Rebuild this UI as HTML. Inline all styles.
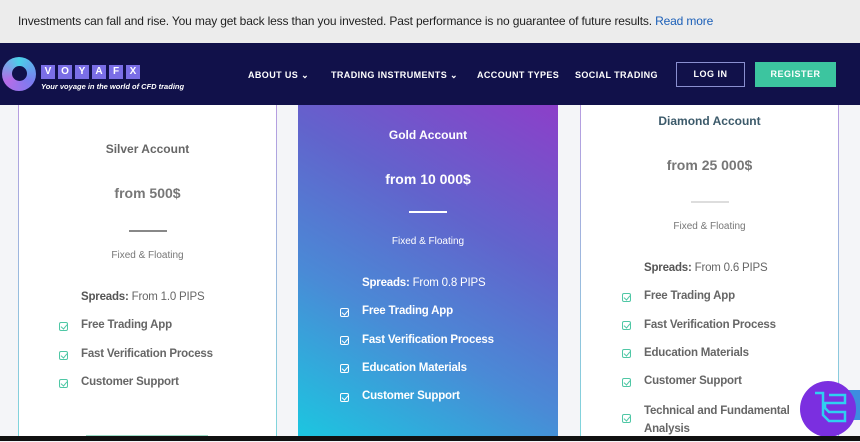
<!DOCTYPE html>
<html><head><style>
*{margin:0;padding:0;box-sizing:border-box}
body{width:860px;height:441px;overflow:hidden;background:#f4f5f8;font-family:"Liberation Sans",sans-serif;position:relative}
.top{position:absolute;left:0;top:0;width:860px;height:43px;background:#ececec;font-size:12px;color:#222;padding:14px 0 0 18px;letter-spacing:-.15px}
.top a{color:#1b5fb8;text-decoration:none}
.nav{position:absolute;left:0;top:43px;width:860px;height:62px;background:#11114a}
.nav .m{position:absolute;top:27px;color:#fff;font-size:9px;font-weight:bold;letter-spacing:.4px}
.btn{position:absolute;top:19px;height:25px;font-size:9px;font-weight:bold;color:#fff;text-align:center;line-height:23px;letter-spacing:.5px}
.card{position:absolute;top:105px;height:331px;background:#fff;text-align:center;color:#666}
.side{position:absolute;top:0;bottom:0;width:1px;background:linear-gradient(#b79ce0,#7fd6dc)}
.t{position:absolute;width:100%;font-size:12px;font-weight:bold}
.p{position:absolute;width:100%;font-size:14px;font-weight:bold;color:#777}
.hr{position:absolute;left:50%;margin-left:-19px;width:38px;height:2px;background:#888}
.f{position:absolute;width:100%;font-size:10px;color:#777}
.li{position:absolute;font-size:11.5px;font-weight:bold;color:#666;text-align:left;letter-spacing:-.2px}
.ck{position:absolute;width:9px;height:9px;border:1.5px solid #4fc7a5;border-radius:2px}
.ck::after{content:"";position:absolute;left:2px;top:0px;width:3px;height:5px;border:solid #4fc7a5;border-width:0 1.5px 1.5px 0;transform:rotate(40deg)}
.gold{background:linear-gradient(30deg,#1cc6e0 0%,#4a8ad6 35%,#6263cc 65%,#8c3fc9 100%);color:#fff}
.gold .t,.gold .p,.gold .f,.gold .li{color:#fff}
.gold .hr{background:#fff}
.gold .ck{border-color:#fff}
.gold .ck::after{border-color:#fff}
.bot{position:absolute;left:0;top:436px;width:860px;height:5px;background:#111}
.lg{width:14px;height:14px;background:#7a6ee6;color:#fff;font-size:10px;font-weight:bold;text-align:center;line-height:14px}
</style></head><body>
<div class="top">Investments can fall and rise. You may get back less than you invested. Past performance is no guarantee of future results. <a>Read more</a></div>
<div class="nav">
<div style="position:absolute;left:2px;top:14px;width:34px;height:34px;border-radius:50%;background:conic-gradient(#4ad0e8,#7b7cf0,#b66ce8,#4ad0e8)"><div style="position:absolute;left:10px;top:9px;width:15px;height:15px;border-radius:50%;background:#11114a"></div></div>
<div style="position:absolute;left:41px;top:22px;display:flex;gap:3px">
<span class="lg">V</span><span class="lg">O</span><span class="lg">Y</span><span class="lg">A</span><span class="lg">F</span><span class="lg">X</span></div>
<div style="position:absolute;left:41px;top:39px;color:#fff;font-size:7.5px;font-style:italic;font-weight:bold">Your voyage in the world of CFD trading</div>
<div class="m" style="left:248px">ABOUT US &#8964;</div>
<div class="m" style="left:331px">TRADING INSTRUMENTS &#8964;</div>
<div class="m" style="left:477px">ACCOUNT TYPES</div>
<div class="m" style="left:575px">SOCIAL TRADING</div>
<div class="btn" style="left:676px;width:69px;border:1.5px solid #8a8fd0">LOG IN</div>
<div class="btn" style="left:755px;width:81px;background:#3cc59f;line-height:25px">REGISTER</div>
</div>

<div class="card" style="left:18px;width:259px">
<div class="side" style="left:0"></div><div class="side" style="right:0"></div>
<div class="t" style="top:37px">Silver Account</div>
<div class="p" style="top:80px">from 500$</div>
<div class="hr" style="top:125px"></div>
<div class="f" style="top:145px">Fixed &amp; Floating</div>
<div class="li" style="left:63px;top:186px"><span style="color:#555">Spreads:</span> <span style="font-weight:normal">From 1.0 PIPS</span></div>
<div class="ck" style="left:41px;top:217px"></div><div class="li" style="left:63px;top:214px">Free Trading App</div>
<div class="ck" style="left:41px;top:246px"></div><div class="li" style="left:63px;top:243px">Fast Verification Process</div>
<div class="ck" style="left:41px;top:274px"></div><div class="li" style="left:63px;top:271px">Customer Support</div>
<div style="position:absolute;left:68px;top:330px;width:122px;height:2px;background:#9ddcc6"></div>
</div>

<div class="card gold" style="left:298px;width:260px">
<div class="t" style="top:23px">Gold Account</div>
<div class="p" style="top:66px">from 10 000$</div>
<div class="hr" style="top:106px"></div>
<div class="f" style="top:131px">Fixed &amp; Floating</div>
<div class="li" style="left:64px;top:172px">Spreads: <span style="font-weight:normal">From 0.8 PIPS</span></div>
<div class="ck" style="left:42px;top:203px"></div><div class="li" style="left:64px;top:200px">Free Trading App</div>
<div class="ck" style="left:42px;top:231px"></div><div class="li" style="left:64px;top:229px">Fast Verification Process</div>
<div class="ck" style="left:42px;top:259px"></div><div class="li" style="left:64px;top:257px">Education Materials</div>
<div class="ck" style="left:42px;top:288px"></div><div class="li" style="left:64px;top:285px">Customer Support</div>
</div>

<div class="card" style="left:580px;width:259px">
<div class="side" style="left:0"></div><div class="side" style="right:0"></div>
<div class="t" style="top:9px;color:#3c5a6a">Diamond Account</div>
<div class="p" style="top:52px">from 25 000$</div>
<div class="hr" style="top:96px;background:#ddd"></div>
<div class="f" style="top:116px">Fixed &amp; Floating</div>
<div class="li" style="left:64px;top:157px"><span style="color:#555">Spreads:</span> <span style="font-weight:normal">From 0.6 PIPS</span></div>
<div class="ck" style="left:42px;top:188px"></div><div class="li" style="left:64px;top:185px">Free Trading App</div>
<div class="ck" style="left:42px;top:216px"></div><div class="li" style="left:64px;top:214px">Fast Verification Process</div>
<div class="ck" style="left:42px;top:244px"></div><div class="li" style="left:64px;top:242px">Education Materials</div>
<div class="ck" style="left:42px;top:273px"></div><div class="li" style="left:64px;top:270px">Customer Support</div>
<div class="ck" style="left:42px;top:309px"></div><div class="li" style="left:64px;top:297px;line-height:18px">Technical and Fundamental<br>Analysis</div>
</div>
<div style="position:absolute;left:839px;top:390px;width:21px;height:30px;background:#3d8de0"></div>
<div style="position:absolute;left:800px;top:381px;width:56px;height:56px;border-radius:50%;background:#7b2fe0">
<svg width="56" height="56" viewBox="0 0 56 56"><path d="M15 12h8v22l6 6h16v-9H29l-4-4V22h20v-8H29" fill="none" stroke="#2fd0f0" stroke-width="2.5"/></svg></div>
<div class="bot"></div>
</body></html>
